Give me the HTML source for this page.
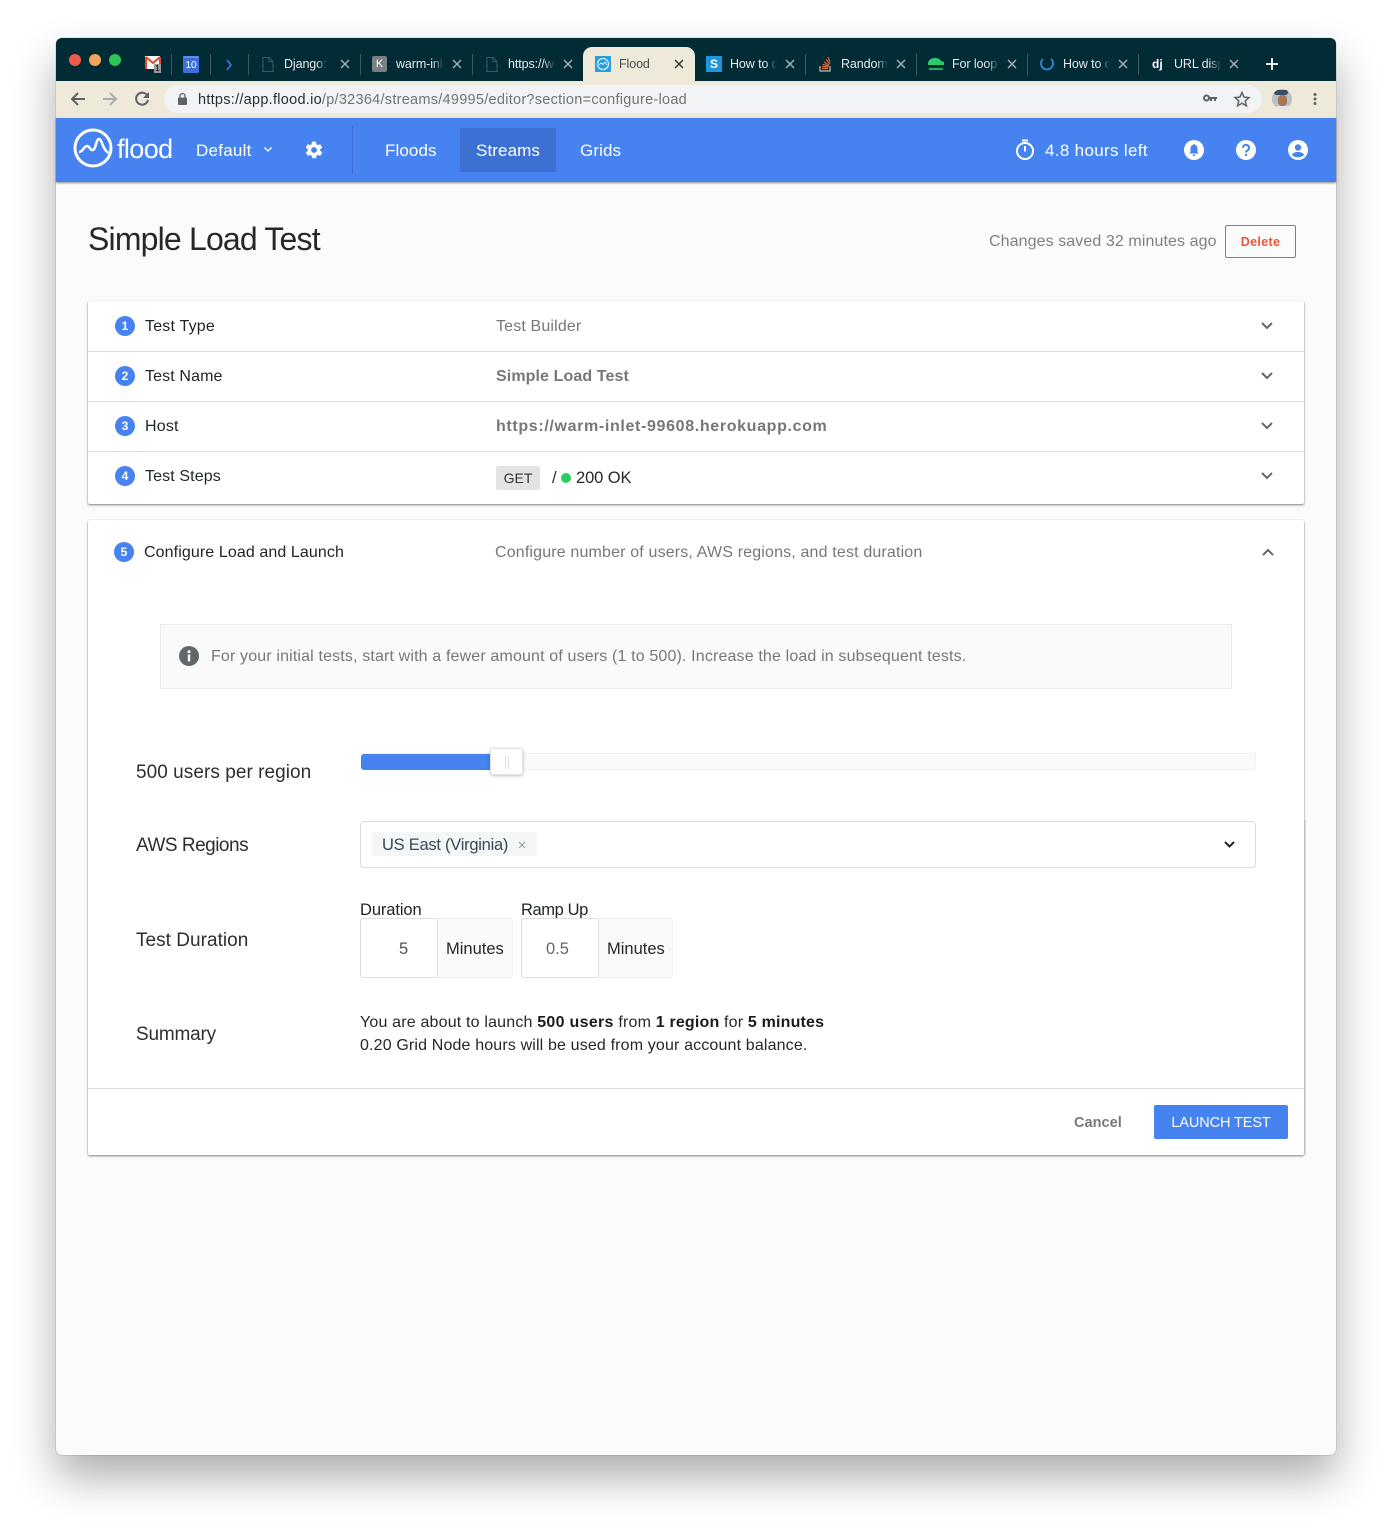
<!DOCTYPE html>
<html><head><meta charset="utf-8"><style>
html,body{margin:0;padding:0;background:#fff}
body{width:1392px;height:1529px;position:relative;overflow:hidden;font-family:"Liberation Sans",sans-serif}
#win{position:absolute;left:56px;top:38px;width:1280px;height:1417px;border-radius:6px;background:#fbfbfb;box-shadow:0 22px 44px rgba(0,0,0,.33),0 0 1px rgba(0,0,0,.5)}
.t{position:absolute;white-space:nowrap;line-height:20px;height:20px}
.a{position:absolute}
svg{position:absolute;overflow:visible}
.tab{font-size:12.5px;color:#e6e9ea;overflow:hidden;letter-spacing:-.1px}
.fade{-webkit-mask-image:linear-gradient(90deg,#000 75%,transparent);mask-image:linear-gradient(90deg,#000 75%,transparent)}
.sep{position:absolute;top:54px;width:1px;height:21px;background:#3d5a62}
.x{stroke:#a9b5b8;stroke-width:1.4;fill:none}
.num{position:absolute;width:20px;height:20px;border-radius:50%;background:#4683f0;color:#fff;font-size:12px;font-weight:bold;text-align:center;line-height:20px}
.l{font-size:16px;color:#1f2426;letter-spacing:.2px}
.g{font-size:16px;color:#777;letter-spacing:.15px}
.b{font-size:16px;color:#777;font-weight:bold;letter-spacing:.1px}
.f{font-size:19px;color:#2b2f31;letter-spacing:.04px}
.n{font-size:17px;color:#fff;letter-spacing:.1px}
.hr{position:absolute;left:88px;width:1216px;height:1px;background:#dcdcdc}
.chev{fill:none;stroke:#666;stroke-width:2}
</style></head><body>
<div id="win"></div>
<!-- tab bar -->
<div class="a" style="left:56px;top:38px;width:1280px;height:43px;background:#022c35;border-radius:6px 6px 0 0"></div>
<div class="a" style="left:69px;top:54px;width:12px;height:12px;border-radius:50%;background:#ed5b4e"></div>
<div class="a" style="left:89px;top:54px;width:12px;height:12px;border-radius:50%;background:#f1a45c"></div>
<div class="a" style="left:109px;top:54px;width:12px;height:12px;border-radius:50%;background:#2bc558"></div>
<!-- gmail -->
<div class="a" style="left:145px;top:56px;width:15px;height:13px;background:#fff"></div>
<svg style="left:145px;top:56px" width="16" height="16"><path d="M1 1v12M15 1v12M1 1l7 6 7-6" fill="none" stroke="#e2492f" stroke-width="2"/></svg>
<div class="a" style="left:154px;top:64px;width:7px;height:9px;background:#999;color:#000;font-size:8px;line-height:9px;text-align:center">1</div>
<!-- calendar -->
<div class="a" style="left:183px;top:56px;width:16px;height:17px;background:#3d6fd8;color:#fff;font-size:10px;text-align:center;border-radius:1px;border-top:2px solid #5f8fe8;box-sizing:border-box;line-height:16px">10</div>
<div class="sep" style="left:171px"></div><div class="sep" style="left:210px"></div><div class="sep" style="left:248px"></div><div class="sep" style="left:360px"></div><div class="sep" style="left:472px"></div>
<svg style="left:225px;top:59px" width="8" height="12"><path d="M2 1l4 5-4 5" fill="none" stroke="#3a7ce0" stroke-width="1.6"/></svg>
<svg style="left:262px;top:57px" width="12" height="15"><path d="M1 .5h6l4 4v10H1z M7 .5v4h4" fill="none" stroke="#3d5a62"/></svg>
<div class="t tab fade" style="left:284px;top:54px;width:44px">Django: Test</div>
<svg style="left:341px;top:60px" width="8" height="8"><path class="x" d="M0 0l8 8M8 0l-8 8"/></svg>
<div class="a" style="left:372px;top:56px;width:15px;height:16px;background:#7a7f81;border-radius:2px;color:#fff;font-size:11px;line-height:16px;text-align:center">K</div>
<div class="t tab fade" style="left:396px;top:54px;width:48px">warm-inlet</div>
<svg style="left:453px;top:60px" width="8" height="8"><path class="x" d="M0 0l8 8M8 0l-8 8"/></svg>
<svg style="left:486px;top:57px" width="12" height="15"><path d="M1 .5h6l4 4v10H1z M7 .5v4h4" fill="none" stroke="#3d5a62"/></svg>
<div class="t tab fade" style="left:508px;top:54px;width:47px">https://warm</div>
<svg style="left:564px;top:60px" width="8" height="8"><path class="x" d="M0 0l8 8M8 0l-8 8"/></svg>
<!-- active tab -->
<div class="a" style="left:583px;top:47px;width:112px;height:34px;background:#efe9d9;border-radius:9px 9px 0 0"></div>
<div class="a" style="left:595px;top:56px;width:16px;height:16px;background:#2a9ee0"></div>
<svg style="left:595px;top:56px" width="16" height="16"><circle cx="8" cy="8" r="5.5" fill="none" stroke="#fff"/><path d="M4 9l2-2 2 1.500 2-2.500 2 3" fill="none" stroke="#fff" stroke-width=".8"/></svg>
<div class="t tab" style="left:619px;top:54px;color:#4a4d4d">Flood</div>
<svg style="left:675px;top:60px" width="8" height="8"><path d="M0 0l8 8M8 0l-8 8" stroke="#333" stroke-width="1.400"/></svg>
<div class="a" style="left:706px;top:56px;width:16px;height:16px;background:#1f96dc;color:#fff;font-size:12px;font-weight:bold;line-height:16px;text-align:center">S</div>
<div class="t tab fade" style="left:730px;top:54px;width:47px">How to do</div>
<svg style="left:786px;top:60px" width="8" height="8"><path class="x" d="M0 0l8 8M8 0l-8 8"/></svg>
<div class="sep" style="left:805px"></div>
<svg style="left:819px;top:56px" width="13" height="16"><path d="M1 10v5h10v-5" fill="none" stroke="#bcbbbb" stroke-width="1.200"/><path d="M3 12.500h6M3.200 10.500l6 .6M3.800 8.500l6 1.500M5 6l5 3M7 3.500l4 4.500M9 1l2 5" stroke="#e8642d" stroke-width="1.200" fill="none"/></svg>
<div class="t tab fade" style="left:841px;top:54px;width:47px">Random number</div>
<svg style="left:897px;top:60px" width="8" height="8"><path class="x" d="M0 0l8 8M8 0l-8 8"/></svg>
<div class="sep" style="left:916px"></div>
<svg style="left:928px;top:57px" width="16" height="14"><path d="M0 7c0-4 3-6 7-6 3 0 5 1 6 3l3 1v3H0z" fill="#2ecb6d"/><path d="M1 12h14" stroke="#2ecb6d" stroke-width="1.600"/></svg>
<div class="t tab fade" style="left:952px;top:54px;width:47px">For loop in</div>
<svg style="left:1008px;top:60px" width="8" height="8"><path class="x" d="M0 0l8 8M8 0l-8 8"/></svg>
<div class="sep" style="left:1027px"></div>
<svg style="left:1040px;top:57px" width="14" height="14"><path d="M3 2a6 6 0 1 0 8 0" fill="none" stroke="#2f8fe0" stroke-width="1.800"/></svg>
<div class="t tab fade" style="left:1063px;top:54px;width:47px">How to do</div>
<svg style="left:1119px;top:60px" width="8" height="8"><path class="x" d="M0 0l8 8M8 0l-8 8"/></svg>
<div class="sep" style="left:1138px"></div>
<div class="t" style="left:1152px;top:54px;font-size:12px;font-weight:bold;color:#fff">dj</div>
<div class="t tab fade" style="left:1174px;top:54px;width:47px">URL dispatcher</div>
<svg style="left:1230px;top:60px" width="8" height="8"><path class="x" d="M0 0l8 8M8 0l-8 8"/></svg>
<svg style="left:1266px;top:58px" width="12" height="12"><path d="M6 0v12M0 6h12" stroke="#fff" stroke-width="1.800"/></svg>
<!-- toolbar -->
<div class="a" style="left:56px;top:81px;width:1280px;height:37px;background:#efe9d9"></div>
<div class="a" style="left:164px;top:85px;width:1098px;height:28px;border-radius:14px;background:#f1f3f4"></div>
<svg style="left:70px;top:91px" width="16" height="16"><path d="M15 8H2M8 2L2 8l6 6" fill="none" stroke="#5f6368" stroke-width="2"/></svg>
<svg style="left:102px;top:91px" width="16" height="16"><path d="M1 8h13M8 2l6 6-6 6" fill="none" stroke="#abadad" stroke-width="2"/></svg>
<svg style="left:134px;top:91px" width="16" height="16"><path d="M13.500 5A6 6 0 1 0 14 9" fill="none" stroke="#5f6368" stroke-width="2"/><path d="M15 1v6H9z" fill="#5f6368"/></svg>
<svg style="left:178px;top:93px" width="9" height="12"><rect x="0" y="4.500" width="9" height="7.500" rx="1" fill="#5f6368"/><path d="M2 5V3a2.500 2.500 0 0 1 5 0v2" fill="none" stroke="#5f6368" stroke-width="1.300"/></svg>
<div class="t" style="left:198px;top:90px;font-size:14.500px;color:#70757a;letter-spacing:.27px"><span style="color:#2b2e30">https://app.flood.io</span>/p/32364/streams/49995/editor?section=configure-load</div>
<svg style="left:1203px;top:94px" width="14" height="9"><circle cx="3.500" cy="4" r="2.500" fill="none" stroke="#5f6368" stroke-width="2"/><path d="M6 3h8v2h-1v2h-2V5H9v2H7V5H6z" fill="#5f6368"/></svg>
<svg style="left:1234px;top:91px" width="16" height="16"><path d="M8 1.500l2 4.600 5 .5-3.800 3.300 1.200 4.900L8 12.200l-4.400 2.600 1.200-4.900L1 6.600l5-.5z" fill="none" stroke="#5f6368" stroke-width="1.500"/></svg>
<div class="a" style="left:1272px;top:89px;width:20px;height:20px;border-radius:50%;background:#b9c0c6;overflow:hidden"><div class="a" style="left:6px;top:6px;width:9px;height:11px;background:#a9754f;border-radius:4px"></div><div class="a" style="left:2px;top:1px;width:14px;height:5px;background:#3c4c63;border-radius:4px"></div><div class="a" style="left:3px;top:17px;width:14px;height:4px;background:#dfe5ea"></div></div>
<svg style="left:1313px;top:93px" width="4" height="12"><circle cx="2" cy="1.500" r="1.500" fill="#5f6368"/><circle cx="2" cy="6" r="1.500" fill="#5f6368"/><circle cx="2" cy="10.500" r="1.500" fill="#5f6368"/></svg>
<!-- header -->
<div class="a" style="left:56px;top:118px;width:1280px;height:64px;background:#4683f0;box-shadow:0 1px 2px rgba(0,0,0,.45)"></div>
<svg style="left:73px;top:128px" width="40" height="40"><circle cx="20" cy="20" r="18" fill="none" stroke="#fff" stroke-width="3"/><path d="M6 24c4 0 5-6 8-6s3 5 6 4 3-11 6-11 4 12 10 14" fill="none" stroke="#fff" stroke-width="2.500"/></svg>
<div class="t" style="left:117px;top:136px;height:26px;line-height:26px;font-size:27px;color:#fff;letter-spacing:-.6px">flood</div>
<div class="t n" style="left:196px;top:141px;letter-spacing:.25px">Default</div>
<svg style="left:264px;top:147px" width="8" height="6"><path d="M.5.500L4 4 7.500.5" fill="none" stroke="#fff" stroke-width="1.300"/></svg>
<svg style="left:304px;top:140px" width="20" height="20" viewBox="0 0 24 24"><path fill="#fff" d="M19.400 13c.04-.33.1-.66.1-1s-.06-.67-.1-1l2.100-1.600c.2-.15.24-.42.12-.64l-2-3.460c-.12-.22-.4-.3-.6-.22l-2.500 1c-.52-.4-1.080-.73-1.700-.98l-.37-2.650A.5.500 0 0 0 14 2h-4a.5.500 0 0 0-.5.420l-.37 2.650c-.62.25-1.180.58-1.700.98l-2.500-1c-.22-.08-.48 0-.6.220l-2 3.460c-.12.22-.08.49.12.64L4.600 11c-.04.33-.1.660-.1 1s.06.67.1 1l-2.100 1.600c-.2.150-.24.420-.12.640l2 3.460c.12.220.4.300.6.220l2.500-1c.52.400 1.080.730 1.700.980l.37 2.650c.04.240.25.420.5.420h4c.25 0 .46-.18.5-.42l.37-2.650c.62-.25 1.180-.58 1.700-.98l2.500 1c.22.080.48 0 .6-.22l2-3.460c.12-.22.08-.49-.12-.64zM12 15.500a3.500 3.500 0 1 1 0-7 3.500 3.500 0 0 1 0 7z"/></svg>
<div class="a" style="left:352px;top:126px;width:1px;height:48px;background:#3a70d0"></div>
<div class="a" style="left:460px;top:128px;width:96px;height:44px;background:#3c71d3"></div>
<div class="t n" style="left:385px;top:141px">Floods</div>
<div class="t n" style="left:476px;top:141px">Streams</div>
<div class="t n" style="left:580px;top:141px">Grids</div>
<svg style="left:1015px;top:139px" width="20" height="22"><path d="M7 1.500h6" stroke="#fff" stroke-width="2"/><circle cx="10" cy="12" r="8" fill="none" stroke="#fff" stroke-width="2"/><path d="M10 7v5.500" stroke="#fff" stroke-width="2"/></svg>
<div class="t n" style="left:1045px;top:141px;letter-spacing:.33px">4.8 hours left</div>
<svg style="left:1184px;top:140px" width="20" height="20"><circle cx="10" cy="10" r="10" fill="#fff"/><path d="M10 4a1 1 0 0 1 1 1c2 .5 2.500 2 2.500 4v3l1.200 1.500H5.300L6.500 12V9c0-2 .5-3.500 2.500-4a1 1 0 0 1 1-1zM8.500 14.500h3a1.500 1.500 0 0 1-3 0z" fill="#4683f0"/></svg>
<svg style="left:1236px;top:140px" width="20" height="20"><circle cx="10" cy="10" r="10" fill="#fff"/><path d="M7 7.800a3 3 0 1 1 4.700 2.500c-1 .7-1.700 1.100-1.700 2.200" fill="none" stroke="#4683f0" stroke-width="2"/><circle cx="10" cy="15" r="1.200" fill="#4683f0"/></svg>
<svg style="left:1288px;top:140px" width="20" height="20"><circle cx="10" cy="10" r="10" fill="#fff"/><circle cx="10" cy="7.500" r="3.200" fill="#4683f0"/><path d="M4 15c1-2.500 3.500-3 6-3s5 .5 6 3c-1.500 1.500-3.500 2.300-6 2.300S5.500 16.500 4 15z" fill="#4683f0"/></svg>
<!-- title -->
<div class="t" style="left:88px;top:220px;height:38px;line-height:38px;font-size:32px;color:#24282a;letter-spacing:-.82px">Simple Load Test</div>
<div class="t" style="left:989px;top:232px;font-size:16px;color:#808080;letter-spacing:.09px">Changes saved 32 minutes ago</div>
<div class="a" style="left:1225px;top:225px;width:69px;height:31px;border:1px solid #e9573a;border-radius:2px;box-sizing:content-box;color:#e9573a;font-size:12.5px;font-weight:bold;line-height:33px;text-align:center;letter-spacing:.35px">Delete</div>
<!-- card 1 -->
<div class="a" style="left:88px;top:301px;width:1216px;height:203px;background:#fff;box-shadow:0 1px 2px rgba(0,0,0,.5);border-radius:2px"></div>
<div class="hr" style="top:351px"></div><div class="hr" style="top:401px"></div><div class="hr" style="top:451px"></div>
<div class="num" style="left:115px;top:316px">1</div><div class="t l" style="left:145px;top:317px">Test Type</div><div class="t g" style="left:496px;top:317px">Test Builder</div>
<div class="num" style="left:115px;top:366px">2</div><div class="t l" style="left:145px;top:367px;letter-spacing:.12px">Test Name</div><div class="t b" style="left:496px;top:367px">Simple Load Test</div>
<div class="num" style="left:115px;top:416px">3</div><div class="t l" style="left:145px;top:417px">Host</div><div class="t b" style="left:496px;top:417px;letter-spacing:.65px">https://warm-inlet-99608.herokuapp.com</div>
<div class="num" style="left:115px;top:466px">4</div><div class="t l" style="left:145px;top:467px;letter-spacing:.12px">Test Steps</div>
<div class="a" style="left:496px;top:466px;width:44px;height:24px;background:#e3e3e3;border-radius:2px;color:#333;font-size:14px;line-height:25px;text-align:center">GET</div>
<div class="t" style="left:552px;top:468px;font-size:16.500px;color:#24282a">/</div>
<div class="a" style="left:561px;top:473px;width:10px;height:10px;border-radius:50%;background:#2ecc65"></div>
<div class="t" style="left:576px;top:468px;font-size:16.500px;color:#24282a;letter-spacing:-.1px">200 OK</div>
<svg style="left:1261px;top:322px" width="12" height="8"><path class="chev" d="M1 1l5 5 5-5"/></svg>
<svg style="left:1261px;top:372px" width="12" height="8"><path class="chev" d="M1 1l5 5 5-5"/></svg>
<svg style="left:1261px;top:422px" width="12" height="8"><path class="chev" d="M1 1l5 5 5-5"/></svg>
<svg style="left:1261px;top:472px" width="12" height="8"><path class="chev" d="M1 1l5 5 5-5"/></svg>
<!-- card 2 -->
<div class="a" style="left:1304px;top:820px;width:2px;height:335px;background:#e6e6e6"></div>
<div class="a" style="left:88px;top:520px;width:1216px;height:635px;background:#fff;box-shadow:0 1px 2px rgba(0,0,0,.5);border-radius:2px"></div>
<div class="num" style="left:114px;top:542px">5</div>
<div class="t l" style="left:144px;top:543px;letter-spacing:.1px">Configure Load and Launch</div>
<div class="t g" style="left:495px;top:543px;letter-spacing:.16px">Configure number of users, AWS regions, and test duration</div>
<svg style="left:1262px;top:548px" width="12" height="8"><path class="chev" d="M1 7l5-5 5 5"/></svg>
<!-- notice -->
<div class="a" style="left:160px;top:624px;width:1070px;height:63px;background:#fafafa;border:1px solid #ececec"></div>
<svg style="left:179px;top:646px" width="20" height="20"><circle cx="10" cy="10" r="10" fill="#62676a"/><rect x="8.800" y="8.500" width="2.400" height="7" fill="#fff"/><circle cx="10" cy="5.800" r="1.500" fill="#fff"/></svg>
<div class="t g" style="left:211px;top:647px;letter-spacing:.15px">For your initial tests, start with a fewer amount of users (1 to 500). Increase the load in subsequent tests.</div>
<!-- slider -->
<div class="a" style="left:361px;top:753px;width:895px;height:17px;background:#f9fafa;border-radius:3px;box-shadow:inset 0 0 0 1px #f1f3f3"></div>
<div class="a" style="left:361px;top:754px;width:130px;height:16px;background:#4683f0;border-radius:3px 0 0 3px"></div>
<div class="a" style="left:490px;top:748px;width:33px;height:27px;background:#fff;border:1px solid #e3e3e3;box-sizing:border-box;border-radius:3px;box-shadow:0 1px 3px rgba(0,0,0,.25)"></div>
<div class="a" style="left:505px;top:756px;width:4px;height:13px;border-left:1px solid #ddd;border-right:1px solid #ddd;box-sizing:border-box"></div>
<div class="t f" style="left:136px;top:763px;letter-spacing:.05px">500 users per region</div>
<!-- regions -->
<div class="t f" style="left:136px;top:836px;letter-spacing:-.5px">AWS Regions</div>
<div class="a" style="left:360px;top:821px;width:896px;height:47px;border:1px solid #dedede;box-sizing:border-box;border-radius:4px;background:#fff"></div>
<div class="a" style="left:372px;top:832px;width:165px;height:24px;background:#f5f6f6;border-radius:3px"></div>
<div class="t" style="left:382px;top:835px;font-size:16.500px;color:#35495a;letter-spacing:-.26px">US East (Virginia)</div>
<svg style="left:518px;top:841px" width="8" height="8"><path d="M1 1l6 6M7 1l-6 6" stroke="#999" stroke-width="1"/></svg>
<svg style="left:1224px;top:841px" width="11" height="7"><path d="M1 1l4.500 4.500L10 1" fill="none" stroke="#222" stroke-width="2"/></svg>
<!-- duration -->
<div class="t f" style="left:136px;top:931px;letter-spacing:.03px">Test Duration</div>
<div class="t" style="left:360px;top:900px;font-size:16.500px;color:#1f2426;letter-spacing:-.1px">Duration</div>
<div class="t" style="left:521px;top:900px;font-size:16.500px;color:#1f2426;letter-spacing:-.4px">Ramp Up</div>
<div class="a" style="left:360px;top:918px;width:153px;height:60px;background:#f9fafa;border-radius:3px;box-shadow:inset 0 0 0 1px #f1f2f2"></div>
<div class="a" style="left:360px;top:918px;width:78px;height:60px;background:#fff;border:1px solid #dedede;box-sizing:border-box;border-radius:3px 0 0 3px"></div>
<div class="t" style="left:399px;top:939px;font-size:16.500px;color:#555">5</div>
<div class="t" style="left:446px;top:939px;font-size:16.500px;color:#24282a;letter-spacing:0">Minutes</div>
<div class="a" style="left:521px;top:918px;width:152px;height:60px;background:#f9fafa;border-radius:3px;box-shadow:inset 0 0 0 1px #f1f2f2"></div>
<div class="a" style="left:521px;top:918px;width:78px;height:60px;background:#fff;border:1px solid #dedede;box-sizing:border-box;border-radius:3px 0 0 3px"></div>
<div class="t" style="left:546px;top:939px;font-size:16.500px;color:#666">0.5</div>
<div class="t" style="left:607px;top:939px;font-size:16.500px;color:#24282a;letter-spacing:0">Minutes</div>
<!-- summary -->
<div class="t f" style="left:136px;top:1025px;letter-spacing:-.2px">Summary</div>
<div class="t" style="left:360px;top:1013px;font-size:16px;color:#24282a;letter-spacing:.18px">You are about to launch <b style="color:#1a1d1f;letter-spacing:.3px">500 users</b> from <b style="color:#1a1d1f">1 region</b> for <b style="color:#1a1d1f">5 minutes</b></div>
<div class="t" style="left:360px;top:1036px;font-size:16px;color:#24282a;letter-spacing:.15px">0.20 Grid Node hours will be used from your account balance.</div>
<!-- footer -->
<div class="hr" style="top:1088px"></div>
<div class="t" style="left:1074px;top:1113px;font-size:14.500px;font-weight:bold;color:#777;letter-spacing:.05px">Cancel</div>
<div class="a" style="left:1154px;top:1105px;width:134px;height:34px;background:#4683f0;border-radius:2px;color:#fff;font-size:14.500px;line-height:36px;text-align:center;letter-spacing:-.1px">LAUNCH TEST</div>
</body></html>
